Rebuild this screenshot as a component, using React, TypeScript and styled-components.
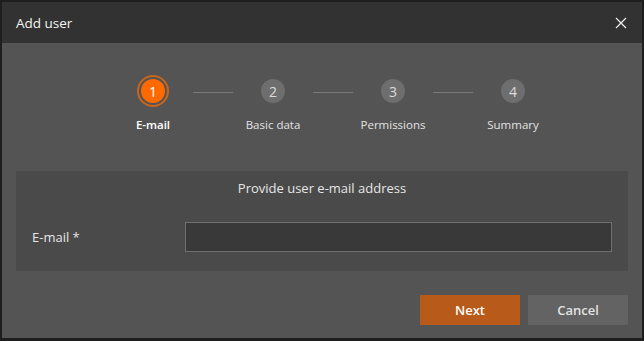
import React from "react";
import styled, { createGlobalStyle } from "styled-components";

const GlobalStyle = createGlobalStyle`
  html, body {
    margin: 0;
    padding: 0;
    background: #1e1e1e;
  }
  body {
    font-family: "Segoe UI", "Open Sans", "Liberation Sans", sans-serif;
  }
`;

const steps = ["E-mail", "Basic data", "Permissions", "Summary"];
const activeStep = 0;

export default function App() {
  return (
    <>
      <GlobalStyle />
      <Dialog>
        <Header>
          <Title>{"Add user"}</Title>
          <CloseButton aria-label="Close">
            <svg width="12" height="12" viewBox="0 0 12 12">
              <path d="M1 1L11 11M11 1L1 11" stroke="#f0f0f0" strokeWidth="1.2" />
            </svg>
          </CloseButton>
        </Header>
        <Body>
          <Stepper>
            {steps.map((label, i) => (
              <React.Fragment key={label}>
                {i > 0 && <Connector />}
                <Step>
                  <IconArea>
                    <StepCircle $active={i === activeStep}>{i + 1}</StepCircle>
                  </IconArea>
                  <StepLabel $active={i === activeStep}>{label}</StepLabel>
                </Step>
              </React.Fragment>
            ))}
          </Stepper>
          <Panel>
            <PanelTitle>{"Provide user e-mail address"}</PanelTitle>
            <FieldRow>
              <FieldLabel>{"E-mail *"}</FieldLabel>
              <TextInput type="email" />
            </FieldRow>
          </Panel>
          <Footer>
            <Button $primary>{"Next"}</Button>
            <Button>{"Cancel"}</Button>
          </Footer>
        </Body>
      </Dialog>
    </>
  );
}

const Dialog = styled.div`
  margin: 2px;
  width: 640px;
  height: 336px;
  background: #545454;
  display: flex;
  flex-direction: column;
`;

const Header = styled.div`
  height: 41px;
  flex-shrink: 0;
  background: #323232;
  display: flex;
  align-items: center;
  justify-content: space-between;
  padding: 0 14px;
`;

const Title = styled.span`
  font-size: 13.5px;
  color: #f2f2f2;
`;

const CloseButton = styled.button`
  background: none;
  border: none;
  padding: 0;
  width: 14px;
  height: 14px;
  display: flex;
  align-items: center;
  justify-content: center;
  cursor: pointer;
`;

const Body = styled.div`
  flex: 1;
  display: flex;
  flex-direction: column;
  padding: 0 14px;
`;

const Stepper = styled.div`
  display: flex;
  justify-content: center;
  align-items: flex-start;
  padding-left: 22px;
  margin-top: 32px;
`;

const Step = styled.div`
  width: 80px;
  display: flex;
  flex-direction: column;
  align-items: center;
`;

const IconArea = styled.div`
  height: 32px;
  display: flex;
  align-items: center;
  justify-content: center;
`;

const StepCircle = styled.div<{ $active?: boolean }>`
  width: 24px;
  height: 24px;
  border-radius: 50%;
  display: flex;
  align-items: center;
  justify-content: center;
  font-size: 14px;
  color: ${(p) => (p.$active ? "#ffffff" : "#dcdcdc")};
  background: ${(p) => (p.$active ? "#ff6a00" : "#6e6e6e")};
  box-shadow: ${(p) =>
    p.$active ? "0 0 0 2px #545454, 0 0 0 4px #c8661c" : "none"};
`;

const StepLabel = styled.div<{ $active?: boolean }>`
  margin-top: 10px;
  font-size: 11.5px;
  line-height: 16px;
  white-space: nowrap;
  font-weight: ${(p) => (p.$active ? 600 : 400)};
  color: ${(p) => (p.$active ? "#ffffff" : "#e2e2e2")};
`;

const Connector = styled.div`
  width: 40px;
  height: 1px;
  margin-top: 17px;
  background: #7a7a7a;
`;

const Panel = styled.div`
  margin-top: 38px;
  background: #4a4a4a;
  padding: 8px 16px 19px;
  display: flex;
  flex-direction: column;
`;

const PanelTitle = styled.div`
  text-align: center;
  font-size: 13px;
  line-height: 18px;
  color: #e6e6e6;
`;

const FieldRow = styled.div`
  margin-top: 25px;
  display: flex;
  align-items: center;
`;

const FieldLabel = styled.label`
  width: 153px;
  flex-shrink: 0;
  font-size: 13px;
  color: #e6e6e6;
`;

const TextInput = styled.input`
  flex: 1;
  height: 30px;
  box-sizing: border-box;
  background: #393939;
  border: 1px solid #707070;
  color: #f0f0f0;
  outline: none;
  padding: 0 8px;
`;

const Footer = styled.div`
  margin-top: 24px;
  display: flex;
  justify-content: flex-end;
  gap: 8px;
`;

const Button = styled.button<{ $primary?: boolean }>`
  width: 100px;
  height: 30px;
  border: none;
  font-family: inherit;
  font-size: 13px;
  font-weight: 600;
  color: ${(p) => (p.$primary ? "#ffffff" : "#e2e2e2")};
  background: ${(p) => (p.$primary ? "#b85a19" : "#636363")};
  cursor: pointer;
`;
